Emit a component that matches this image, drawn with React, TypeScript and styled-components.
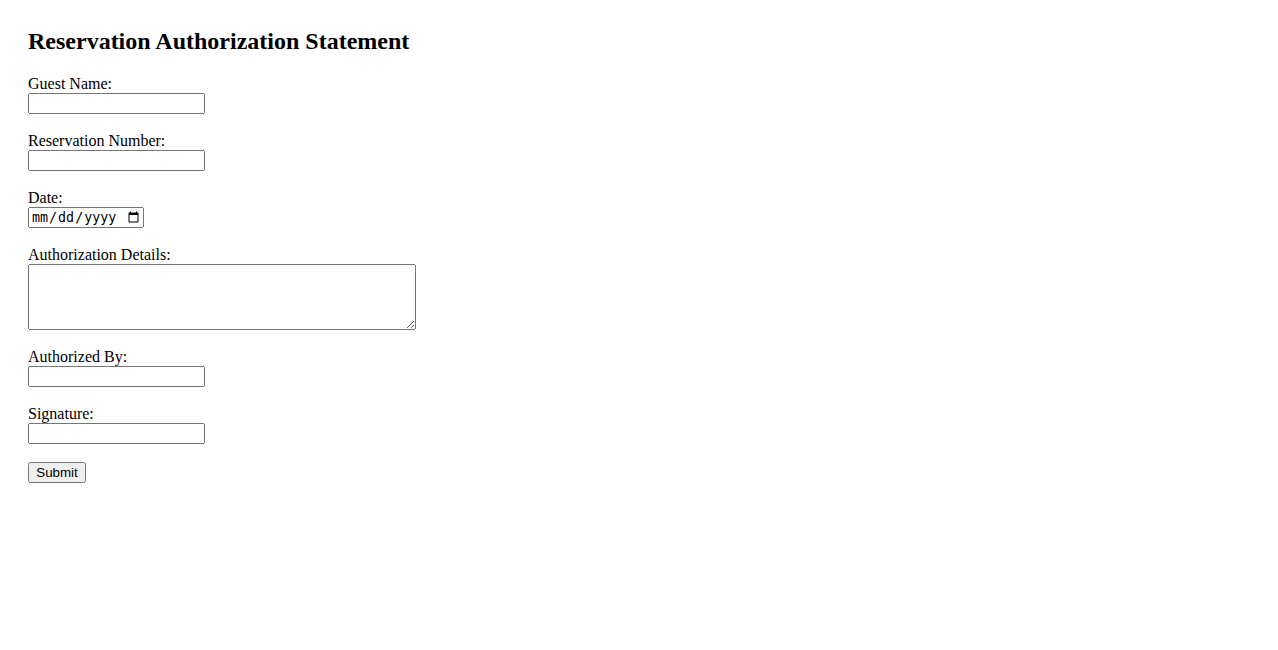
import React from 'react';
import styled, { createGlobalStyle } from 'styled-components';

const GlobalStyle = createGlobalStyle`
  html, body {
    margin: 0;
    background: #ffffff;
  }
  body {
    font-family: "Liberation Serif", "Times New Roman", serif;
    font-size: 16px;
    color: #000000;
  }
`

const Page = styled.main`
  padding: 27px 28px;
`

const Title = styled.h2`
  margin: 0 0 20px;
  font-size: 24px;
  line-height: 28px;
  font-weight: bold;
`

const Form = styled.form`
  display: flex;
  flex-direction: column;
  align-items: flex-start;
`

const Field = styled.div`
  display: flex;
  flex-direction: column;
  align-items: flex-start;
  margin-bottom: 18px;
`

const Label = styled.label`
  font-size: 16px;
  line-height: 18px;
`

const TextInput = styled.input`
  box-sizing: border-box;
  width: 177px;
  height: 21px;
  margin: 0;
  font-family: "Liberation Sans", Arial, sans-serif;
  font-size: 13.333px;
`

const DateInput = styled.input`
  box-sizing: border-box;
  width: 116px;
  height: 21px;
  margin: 0;
  font-size: 13.333px;
`

const Details = styled.textarea`
  box-sizing: border-box;
  width: 388px;
  height: 66px;
  margin: 0;
  font-family: "Liberation Mono", "Courier New", monospace;
  font-size: 13.333px;
`

const SubmitButton = styled.button`
  box-sizing: border-box;
  margin: 0;
  width: 58px;
  height: 21px;
  padding: 1px 6px;
  font-family: "Liberation Sans", Arial, sans-serif;
  font-size: 13.333px;
`

const App = () => {
    return (<>
        <GlobalStyle/>
        <Page>
            <Title>Reservation Authorization Statement</Title>
            <Form onSubmit={e => e.preventDefault()}>
                <Field>
                    <Label htmlFor="guestName">Guest Name:</Label>
                    <TextInput type="text" id="guestName" name="guestName"/>
                </Field>
                <Field>
                    <Label htmlFor="reservationNumber">Reservation Number:</Label>
                    <TextInput type="text" id="reservationNumber" name="reservationNumber"/>
                </Field>
                <Field>
                    <Label htmlFor="date">Date:</Label>
                    <DateInput type="date" id="date" name="date"/>
                </Field>
                <Field>
                    <Label htmlFor="details">Authorization Details:</Label>
                    <Details id="details" name="details"/>
                </Field>
                <Field>
                    <Label htmlFor="authorizedBy">Authorized By:</Label>
                    <TextInput type="text" id="authorizedBy" name="authorizedBy"/>
                </Field>
                <Field>
                    <Label htmlFor="signature">Signature:</Label>
                    <TextInput type="text" id="signature" name="signature"/>
                </Field>
                <SubmitButton type="submit">Submit</SubmitButton>
            </Form>
        </Page>
    </>);
}

export default App;
